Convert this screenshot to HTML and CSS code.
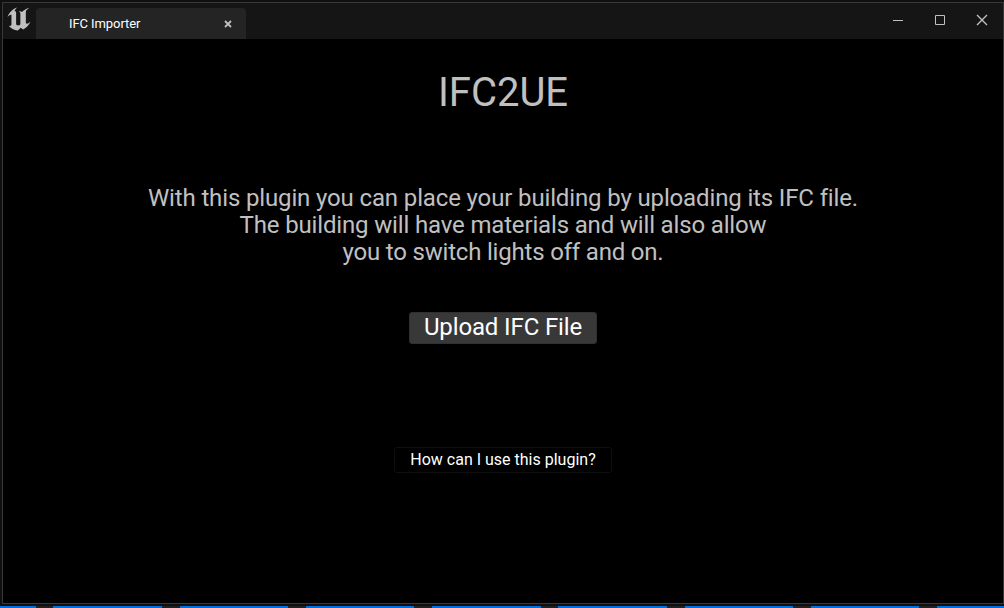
FILE: index.html
```html
<!DOCTYPE html>
<html lang="en">
<head>
<meta charset="utf-8">
<title>IFC Importer</title>
<link rel="stylesheet" href="styles.css">
</head>
<body>
<div class="window">
  <header class="titlebar">
    <svg class="logo" width="24" height="24" viewBox="0 0 23.300 23.700"><path d="M10 .5C5.700 1.500 2 5.500 .3 9.800C2 7.900 3.400 7.200 4.200 7.700V16.800C4.200 18.500 3.400 18.900 1.500 18.600C3.600 21 6.600 23.200 10.500 23.200L13.400 20.600L15.700 22.200C19 20.500 21.500 17.700 23 14.500C20.900 16.200 19.200 17.200 18.400 15.800V5C18.400 3.300 20 1.800 22 .7C18.500 1.600 16 3.400 14.600 5C13.900 4.200 12.800 4.200 11.500 4.300C12.600 5 13 5.700 13 6.900V17C12 18.700 8.800 18.600 8.800 16.500V5.500C8.800 4.500 8.100 4.100 7.200 4.300C7.600 2.800 8.600 1.500 10 .5Z"/></svg>
    <div class="tab">
      <span class="tab-label">IFC Importer</span>
      <svg class="tab-close" width="8" height="8" viewBox="0 0 8 8"><path d="M1 1L7 7M7 1L1 7"/></svg>
    </div>
    <div class="controls">
      <svg width="12" height="12" viewBox="0 0 12 12"><path d="M1 6.500H11"/></svg>
      <svg width="12" height="12" viewBox="0 0 12 12"><path d="M1.500 1.500H10.500V10.500H1.500Z"/></svg>
      <svg width="12" height="12" viewBox="0 0 12 12"><path class="cross" d="M1 1L11 11M11 1L1 11"/></svg>
    </div>
  </header>
  <main class="content">
    <h1 class="title">IFC2UE</h1>
    <div class="description">
      <p class="line-one">With this plugin you can place your building by uploading its IFC file.</p>
      <p class="line-two">The building will have materials and will also allow</p>
      <p class="line-three">you to switch lights off and on.</p>
    </div>
    <button class="upload">Upload IFC File</button>
    <button class="help">How can I use this plugin?</button>
  </main>
</div>
<div class="strip"></div>
</body>
</html>
```
FILE: styles.css
```css
* { box-sizing: border-box; }
body {
  margin: 0;
  width: 1004px;
  height: 608px;
  padding: 2px 0 0 2px;
  overflow: hidden;
  background: #101010;
  font-family: Roboto, sans-serif;
}
.window {
  width: 1002px;
  height: 602px;
  border: 1px solid #383838;
  background: #000;
}
.titlebar {
  display: flex;
  height: 36px;
  background: #151515;
}
.logo { margin: 4px 5px 0 4px; fill: #c0c0c0; }
.tab {
  display: flex;
  align-items: center;
  justify-content: space-between;
  width: 210px;
  height: 31px;
  margin-top: 5px;
  padding: 0 14px 0 33px;
  border-radius: 4px 4px 0 0;
  background: #242424;
}
.tab-label {
  color: #fff;
  font-size: 13px;
  line-height: 16px;
  letter-spacing: -.08px;
  white-space: nowrap;
}
.tab-close { fill: none; stroke: #c0c0c0; stroke-width: 1.8; }
.controls {
  display: flex;
  gap: 30px;
  margin: 11px 15px 0 auto;
  fill: none;
  stroke: #c0c0c0;
}
.controls svg { display: block; }
.cross { stroke-width: 1.4; }
.content {
  display: flex;
  flex-direction: column;
  align-items: center;
  color: #c0c0c0;
}
.title {
  margin: 30px 0 0;
  font-size: 40px;
  line-height: 48px;
  font-weight: 400;
}
.description {
  margin-top: 68px;
  font-size: 24px;
  line-height: 27px;
  text-align: center;
  white-space: nowrap;
}
.description p { margin: 0; }
.line-one { letter-spacing: -.14px; }
.line-two { letter-spacing: -.155px; }
.line-three { letter-spacing: -.19px; }
.upload, .help {
  padding: 0;
  font-family: inherit;
  color: #fff;
  white-space: nowrap;
}
.upload {
  width: 188px;
  height: 32px;
  margin-top: 46px;
  padding-bottom: 1px;
  border: 1px solid #303030;
  border-radius: 3px;
  background: #383838;
  font-size: 24px;
  line-height: 29px;
  letter-spacing: -.13px;
}
.help {
  width: 218px;
  height: 26px;
  margin-top: 103px;
  border: 1px solid #0f0f0f;
  border-radius: 3px;
  background: #000;
  font-size: 16px;
  line-height: 24px;
}
.strip {
  height: 2px;
  margin: 2px 0 0 -2px;
  background: linear-gradient(90deg, #0070e0 0 36px, #202020 36px 53px, #0070e0 53px 162px, #202020 162px 180px, #0070e0 180px 288px, #202020 288px 306px, #0070e0 306px 414px, #202020 414px 432px, #0070e0 432px 541px, #202020 541px 558px, #0070e0 558px 667px, #202020 667px 685px, #0070e0 685px 793px, #202020 793px 811px, #0070e0 811px 919px, #202020 919px 937px, #0070e0 937px);
}
```
